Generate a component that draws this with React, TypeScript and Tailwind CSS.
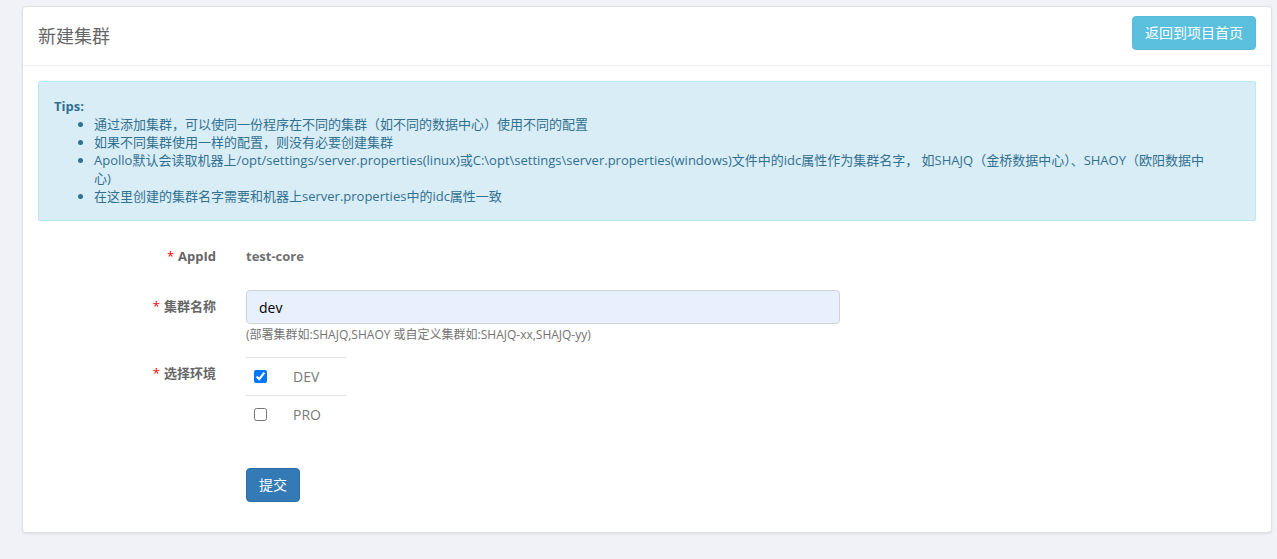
import { useState } from "react";

const font = {
  fontFamily: '"Open Sans", "Noto Sans CJK SC", sans-serif',
};

function Label({ text }: { text: string }) {
  return (
    <div className="w-[178px] shrink-0 pt-[7px] text-right text-[13px] leading-[18px] font-bold text-[#666]">
      <span className="text-[#ff0000] font-normal mr-[4px]">*</span>
      {text}
    </div>
  );
}

export default function App() {
  const [name, setName] = useState("dev");
  const [envs, setEnvs] = useState<Record<string, boolean>>({
    DEV: true,
    PRO: false,
  });

  return (
    <div
      className="min-h-screen bg-[#f0f2f7] pt-[6px] pl-[22px] pr-[5px]"
      style={font}
    >
      <div className="bg-white border border-[#dfe1e6] rounded-[4px] shadow-[0_1px_2px_rgba(0,0,0,0.08)]">
        {/* header */}
        <div className="flex justify-between h-[59px] border-b border-[#eceef2] px-[15px]">
          <h3 className="self-center mt-[1px] text-[18px] leading-[25px] text-[#666]">
            新建集群
          </h3>
          <button className="mt-[9px] h-[34px] px-[12px] rounded-[4px] bg-[#5bc0de] border border-[#56bcdb] text-white text-[14px] leading-[20px]">
            返回到项目首页
          </button>
        </div>

        {/* body */}
        <div className="px-[15px] pt-[15px] pb-[30px]">
          <div className="border border-[#bce8f1] bg-[#d9edf7] rounded-[2px] px-[15px] py-[15px] text-[13px] leading-[18px] text-[#31708f]">
            <strong>Tips:</strong>
            <ul className="list-disc pl-[40px]">
              <li>通过添加集群，可以使同一份程序在不同的集群（如不同的数据中心）使用不同的配置</li>
              <li>如果不同集群使用一样的配置，则没有必要创建集群</li>
              <li>
                Apollo默认会读取机器上/opt/settings/server.properties(linux)或C:\opt\settings\server.properties(windows)文件中的idc属性作为集群名字，
                如SHAJQ（金桥数据中心）、SHAOY（欧阳数据中
                <br />
                心)
              </li>
              <li>在这里创建的集群名字需要和机器上server.properties中的idc属性一致</li>
            </ul>
          </div>

          <div className="mt-[19px] flex flex-col">
            <div className="flex h-[34px] gap-[30px]">
              <Label text="AppId" />
              <div className="pt-[7px] text-[13px] leading-[18px] font-bold text-[#707070]">
                test-core
              </div>
            </div>

            <div className="flex mt-[16px] gap-[30px]">
              <Label text="集群名称" />
              <div className="w-[594px]">
                <input
                  value={name}
                  onChange={(e) => setName(e.target.value)}
                  className="w-full h-[34px] px-[12px] rounded-[4px] border border-[#cfd2d8] bg-[#e8f0fe] text-[14px] text-black outline-none"
                />
                <p className="mt-[2px] text-[12px] leading-[17px] text-[#737373]">
                  (部署集群如:SHAJQ,SHAOY 或自定义集群如:SHAJQ-xx,SHAJQ-yy)
                </p>
              </div>
            </div>

            <div className="flex mt-[14px] gap-[30px]">
              <Label text="选择环境" />
              <div className="w-[100px]">
                {Object.keys(envs).map((env) => (
                  <label
                    key={env}
                    className="flex items-center h-[38px] border-t border-[#e3e3e3] cursor-pointer"
                  >
                    <span className="w-[47px] pl-[8px] flex items-center">
                      <input
                        type="checkbox"
                        checked={envs[env]}
                        onChange={() =>
                          setEnvs((prev) => ({ ...prev, [env]: !prev[env] }))
                        }
                        className="w-[13px] h-[13px] m-0"
                      />
                    </span>
                    <span className="text-[14px] leading-[20px] text-[#7a7a7a]">
                      {env}
                    </span>
                  </label>
                ))}
              </div>
            </div>

            <div className="flex mt-[35px] gap-[30px]">
              <div className="w-[178px] shrink-0" />
              <button className="h-[34px] px-[12px] rounded-[4px] bg-[#337ab7] border border-[#2e6da4] text-white text-[14px] leading-[20px]">
                提交
              </button>
            </div>
          </div>
        </div>
      </div>
    </div>
  );
}
